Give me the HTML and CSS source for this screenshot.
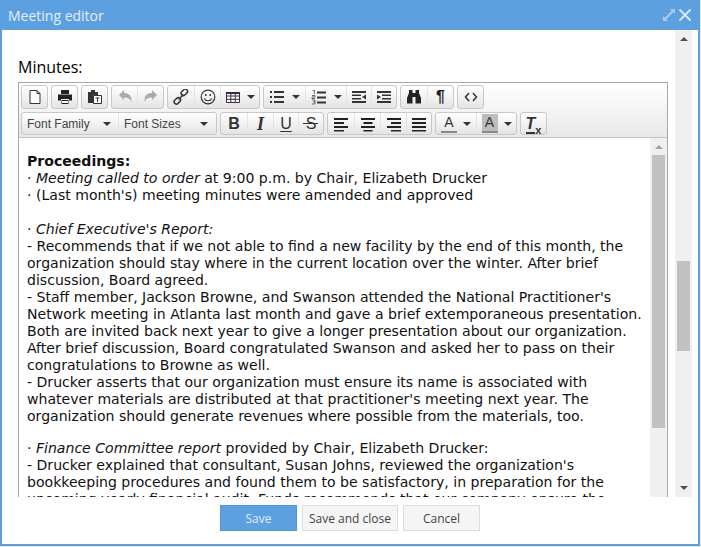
FILE: index.html
```html
<!DOCTYPE html>
<html lang="en">
<head>
<meta charset="utf-8">
<title>Meeting editor</title>
<link rel="stylesheet" href="styles.css">
</head>
<body>
<div class="window">
  <header class="titlebar">
    <span class="title">Meeting editor</span>
    <span class="winctl">
      <svg class="winicon" viewBox="0 0 14 14"><path d="M8 1h5v5l-1.800-1.800-7 7L6 13H1V8l1.800 1.800 7-7z" fill="#a9cdf0"/></svg>
      <svg class="winicon" viewBox="0 0 14 14"><path d="M1.500 1.500l11 11M12.500 1.500l-11 11" stroke="#dbe9f8" stroke-width="1.800" fill="none"/></svg>
    </span>
  </header>
  <div class="main">
    <div class="pane">
      <div class="label">Minutes:</div>
      <div class="editor">
        <div class="toolbar">
          <div class="row">
            <div class="group"><span class="btn"><svg class="i" viewBox="0 0 16 16"><path d="M3 1.500h7l3 3v10H3zM10 1.500v3h3" fill="#fff" stroke="#333"/></svg></span></div>
            <div class="group"><span class="btn"><svg class="i" viewBox="0 0 16 16"><path d="M4 1h8v4H4zM1 5.500h14v6h-3V10H4v1.500H1zM4.500 11h7v4h-7z" fill="#222"/><path d="M5 12h6v2H5z" fill="#fff"/></svg></span></div>
            <div class="group"><span class="btn"><svg class="i" viewBox="0 0 16 16"><path d="M1 3h3V1h4v2h3v3H6v8H1z" fill="#333"/><path d="M6.500 6.500h8v8h-8z" fill="#fff" stroke="#333"/><path d="M8.500 8.500h4v1h-1.500v3.500h-1V9.500H8.500z" fill="#333"/></svg></span></div>
            <div class="group">
              <span class="btn off"><svg class="i" viewBox="0 0 16 16"><path d="M2 6l5-5v3c5 0 8 3 7.500 9-1.500-3.500-3.500-4.500-7.500-4.500V11z" fill="#aaa"/></svg></span>
              <span class="btn btn26 off"><svg class="i" viewBox="0 0 16 16"><path d="M14 6L9 1v3C4 4 1 7 1.500 13 3 9.500 5 8.500 9 8.500V11z" fill="#aaa"/></svg></span>
            </div>
            <div class="group">
              <span class="btn btn26"><svg class="i" viewBox="0 0 16 16"><g fill="none" stroke="#333" stroke-width="1.500"><rect x="8" y="1" width="7" height="4.500" rx="2" transform="rotate(-45 11.500 3.500)"/><rect x="1" y="9.500" width="7" height="4.500" rx="2" transform="rotate(-45 4.500 12)"/><path d="M5.500 10.500l5-5"/></g></svg></span>
              <span class="btn btn26"><svg class="i" viewBox="0 0 16 16"><circle cx="8" cy="8" r="6.800" fill="none" stroke="#333" stroke-width="1.200"/><circle cx="5.800" cy="6" r="1" fill="#333"/><circle cx="10.200" cy="6" r="1" fill="#333"/><path d="M4.300 9.500c1.500 3 5.900 3 7.400 0" fill="none" stroke="#333" stroke-width="1.200"/></svg></span>
              <span class="btn btn39"><svg class="i" viewBox="0 0 16 16"><path d="M1.500 3.500h13v10h-13zM1.500 7h13M1.500 10.300h13M5.800 3.500v10M10.200 3.500v10" fill="#fff" stroke="#3a2a4a"/><path d="M1 3h14v2H1z" fill="#3a2a4a"/></svg><i class="caret"></i></span>
            </div>
            <div class="group">
              <span class="btn btn41"><svg class="i" viewBox="0 0 16 16"><path d="M1 2h2v2H1zM1 7h2v2H1zM1 12h2v2H1zM5 2h10v2H5zM5 7h10v2H5zM5 12h10v2H5z" fill="#333"/></svg><i class="caret"></i></span>
              <span class="btn btn41"><svg class="i" viewBox="0 0 16 16"><path d="M6 2.500h9v2H6zM6 7.500h9v2H6zM6 12.500h9v2H6z" fill="#333"/><path d="M1.500 1.500h2V5M1 6.500h3v1.500H1v1.500h3M1 11h3v4H1M2 13h2" fill="none" stroke="#333" stroke-width=".7"/></svg><i class="caret"></i></span>
              <span class="btn"><svg class="i" viewBox="0 0 16 16"><path d="M1 2h14v2H1zM1 12h14v2H1zM1 5.500h9v1.500H1zM1 9h9v1.500H1z" fill="#333"/><path d="M15 5.500v5L11 8z" fill="#333"/></svg></span>
              <span class="btn"><svg class="i" viewBox="0 0 16 16"><path d="M1 2h14v2H1zM1 12h14v2H1zM6 5.500h9v1.500H6zM6 9h9v1.500H6z" fill="#333"/><path d="M1 5.500v5L5 8z" fill="#333"/></svg></span>
            </div>
            <div class="group">
              <span class="btn btn26"><svg class="i" viewBox="0 0 16 16"><path d="M3 1h3.500v3h3V1H13v3l2 5v5.500H9.500V8h-3v6.500H1V9l2-5z" fill="#222"/></svg></span>
              <span class="btn btn26"><span class="pilcrow">¶</span></span>
            </div>
            <div class="group"><span class="btn"><svg class="i" viewBox="0 0 16 16"><path d="M6 4L2.500 8 6 12M10 4l3.500 4-3.500 4" fill="none" stroke="#333" stroke-width="1.500"/></svg></span></div>
          </div>
          <div class="row row2">
            <div class="group">
              <span class="btn lb lb1"><span class="lbtext">Font Family</span><i class="caret"></i></span>
              <span class="btn lb lb2"><span class="lbtext">Font Sizes</span><i class="caret"></i></span>
            </div>
            <div class="group">
              <span class="btn btn26 glyph bold">B</span>
              <span class="btn btn26 glyph ital">I</span>
              <span class="btn glyph under">U</span>
              <span class="btn glyph strike">S</span>
            </div>
            <div class="group">
              <span class="btn btn26"><svg class="i" viewBox="0 0 16 16"><path d="M1 2h14v2H1zM1 6h10v2H1zM1 10h14v2H1zM1 14h10v1.500H1z" fill="#222"/></svg></span>
              <span class="btn btn26"><svg class="i" viewBox="0 0 16 16"><path d="M1 2h14v2H1zM3.500 6h9v2h-9zM1 10h14v2H1zM3.500 14h9v1.500h-9z" fill="#222"/></svg></span>
              <span class="btn btn26"><svg class="i" viewBox="0 0 16 16"><path d="M1 2h14v2H1zM5 6h10v2H5zM1 10h14v2H1zM5 14h10v1.500H5z" fill="#222"/></svg></span>
              <span class="btn"><svg class="i" viewBox="0 0 16 16"><path d="M1 2h14v2H1zM1 6h14v2H1zM1 10h14v2H1zM1 14h14v1.500H1z" fill="#222"/></svg></span>
            </div>
            <div class="group">
              <span class="btn btn40"><span class="colora">A</span><i class="caret"></i></span>
              <span class="btn btn40"><span class="colora shade">A</span><i class="caret"></i></span>
            </div>
            <div class="group"><span class="btn clear"><span class="tee">T</span><span class="ex">x</span></span></div>
          </div>
        </div>
        <div class="content">
          <div class="textcol">
            <div class="para">
              <strong>Proceedings:</strong><br>
              · <em>Meeting called to order</em> at 9:00 p.m. by Chair, Elizabeth Drucker<br>
              · (Last month's) meeting minutes were amended and approved<br>
              <br>
              · <em>Chief Executive's Report:</em><br>
              - Recommends that if we not able to find a new facility by the end of this month, the<br>
              organization should stay where in the current location over the winter. After brief<br>
              discussion, Board agreed.<br>
              - Staff member, Jackson Browne, and Swanson attended the National Practitioner's<br>
              Network meeting in Atlanta last month and gave a brief extemporaneous presentation.<br>
              Both are invited back next year to give a longer presentation about our organization.<br>
              After brief discussion, Board congratulated Swanson and asked her to pass on their<br>
              congratulations to Browne as well.<br>
              - Drucker asserts that our organization must ensure its name is associated with<br>
              whatever materials are distributed at that practitioner's meeting next year. The<br>
              organization should generate revenues where possible from the materials, too.
            </div>
            <div class="para">
              · <em>Finance Committee report</em> provided by Chair, Elizabeth Drucker:<br>
              - Drucker explained that consultant, Susan Johns, reviewed the organization's<br>
              bookkeeping procedures and found them to be satisfactory, in preparation for the<br>
              upcoming yearly financial audit. Funds recommends that our company ensure the
            </div>
          </div>
          <div class="innerbar">
            <i class="arrow up grey"></i>
            <i class="thumb innerthumb"></i>
          </div>
        </div>
      </div>
    </div>
    <div class="outerbar">
      <i class="arrow up dark"></i>
      <i class="thumb outerthumb"></i>
      <i class="arrow down dark"></i>
    </div>
  </div>
  <footer class="footer">
    <button class="action primary">Save</button>
    <button class="action wide">Save and close</button>
    <button class="action cancel">Cancel</button>
  </footer>
</div>
</body>
</html>
```
FILE: styles.css
```css
* { box-sizing: border-box; }
html, body { margin: 0; padding: 0; }
body { width: 701px; height: 547px; overflow: hidden; background: #e8e8e8; font-family: "Open Sans", sans-serif; }
.window { width: 700px; height: 546px; display: flex; flex-direction: column; background: #fff; border: solid #5da0df; border-width: 0 2px 2px 2px; }
.titlebar { flex: none; height: 30px; margin: 0 -2px; padding: 0 8px; background: #5da0df; display: flex; align-items: center; justify-content: space-between; }
.title { color: #e3eefa; font-size: 14px; }
.winctl { display: flex; gap: 2px; }
.winicon { width: 14px; height: 14px; display: block; }
.main { flex: none; height: 467px; display: flex; overflow: hidden; }
.pane { flex: none; width: 673px; padding: 26px 0 0 16px; overflow: hidden; }
.label { font-size: 16px; line-height: 22px; height: 26px; color: #000; }
.editor { width: 650px; height: 430px; border: 1px solid #a8a8a8; border-bottom: 0; display: flex; flex-direction: column; }
.toolbar { flex: none; height: 55px; padding: 2px 2px 0; background: linear-gradient(#fff, #e8e8e8); border-bottom: 1px solid #c4c4c4; display: flex; flex-direction: column; gap: 3px; }
.row { display: flex; gap: 3px; height: 24px; }
.row2 { height: 23px; }
.group { display: flex; border: 1px solid #c8c8c8; border-radius: 3px; background: linear-gradient(#fff, #e4e4e4); }
.btn { width: 25px; height: 100%; display: flex; align-items: center; justify-content: center; gap: 6px; color: #333; }
.btn + .btn { border-left: 1px solid #e4e4e4; }
.btn26 { width: 26px; }
.btn39 { width: 39px; }
.btn40 { width: 40px; }
.btn41 { width: 41px; gap: 7px; }
.i { width: 16px; height: 16px; display: block; flex: none; }
.caret { flex: none; width: 0; height: 0; border: 4px solid transparent; border-top-color: #333; border-bottom: 0; }
.lb { justify-content: space-between; padding: 0 7px 0 5px; font-family: "Liberation Sans", sans-serif; font-size: 12px; }
.lb1 { width: 96px; }
.lb2 { width: 98px; padding-right: 8px; }
.lbtext { color: #444; }
.glyph { font-family: "Liberation Sans", sans-serif; font-size: 16px; color: #333; line-height: 1; }
.bold { font-weight: 700; }
.ital { font-family: "Liberation Serif", serif; font-style: italic; font-weight: 700; font-size: 18px; }
.under { text-decoration: underline; text-underline-offset: 2px; }
.strike { position: relative; }
.strike::after { content: ""; position: absolute; left: 4px; right: 5px; top: 10px; height: 1px; background: #333; }
.clear { gap: 0; align-items: flex-start; padding-top: 2px; color: #333; font-family: "Liberation Sans", sans-serif; }
.tee { font-style: italic; font-weight: 700; font-size: 16px; line-height: 17px; border-bottom: 2px solid #333; }
.ex { font-size: 11px; line-height: 11px; margin-top: 10px; font-weight: 700; }
.pilcrow { font-family: "Liberation Sans", sans-serif; font-weight: 700; font-size: 16px; color: #222; }
.colora { width: 16px; height: 19px; text-align: center; font-family: "Liberation Sans", sans-serif; font-size: 14px; line-height: 17px; border-bottom: 2px solid #888; color: #333; }
.shade { background: #bdbdbd; }
.content { flex: 1; min-height: 0; display: flex; overflow: hidden; }
.textcol { flex: 1; min-width: 0; padding: 15px 0 0 8px; font-family: "DejaVu Sans", sans-serif; font-size: 14.070px; line-height: 17px; color: #111; white-space: nowrap; overflow: hidden; }
.para + .para { margin-top: 15px; }
.innerbar { flex: none; width: 17px; background: #f0f0f0; display: flex; flex-direction: column; align-items: center; padding-top: 7px; gap: 6px; }
.thumb { display: block; flex: none; width: 13px; background: #c1c1c1; }
.innerthumb { height: 273px; }
.outerbar { flex: none; width: 17px; background: #f0f0f0; display: flex; flex-direction: column; align-items: center; padding: 7px 0; }
.outerthumb { height: 90px; margin: 220px 0 135px; }
.arrow { display: block; flex: none; width: 0; height: 0; border: 4px solid transparent; border-top: 0; border-bottom: 4px solid #505050; }
.arrow.down { border-bottom: 0; border-top: 4px solid #505050; }
.arrow.grey { border-bottom-color: #a3a3a3; }
.footer { flex: none; padding-top: 8px; display: flex; justify-content: center; gap: 5px; }
.action { height: 26px; padding: 0; font-family: "Open Sans", sans-serif; font-size: 12px; border: 1px solid #ddd; background: #f5f5f5; color: #444; }
.primary { width: 77px; background: #5da0df; border-color: #5097da; color: #dfecfa; }
.wide { width: 96px; }
.cancel { width: 77px; }
```
